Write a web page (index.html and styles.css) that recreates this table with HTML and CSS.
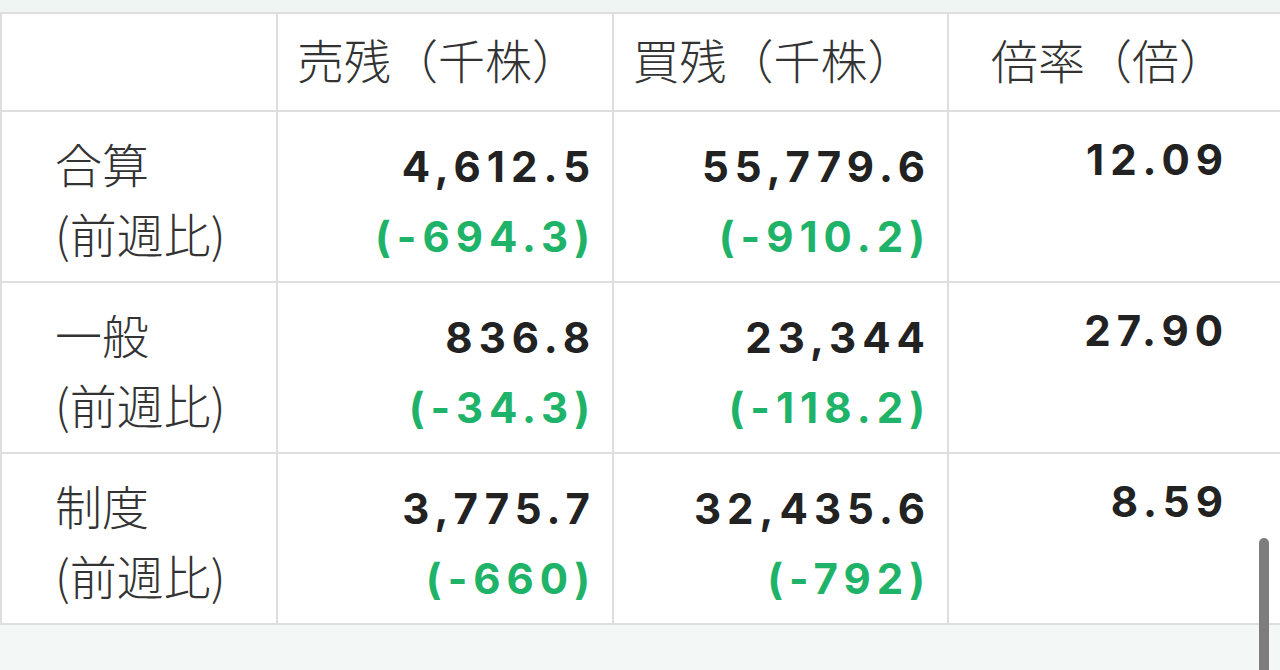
FILE: index.html
```html
<!DOCTYPE html>
<html lang="ja">
<head>
<meta charset="utf-8">
<link rel="stylesheet" href="styles.css">
</head>
<body>
<div class="band-top"></div>
<table class="margin-table">
  <colgroup>
    <col class="c-label">
    <col class="c-sell">
    <col class="c-buy">
    <col class="c-ratio">
  </colgroup>
  <thead>
    <tr>
      <th></th>
      <th>売残（千株）</th>
      <th>買残（千株）</th>
      <th class="h-ratio">倍率（倍）</th>
    </tr>
  </thead>
  <tbody>
    <tr>
      <td class="label">合算<br>(前週比)</td>
      <td class="num"><div class="val">4,612.5</div><div class="chg">(-694.3)</div></td>
      <td class="num"><div class="val">55,779.6</div><div class="chg">(-910.2)</div></td>
      <td class="num ratio"><div class="val">12.09</div></td>
    </tr>
    <tr>
      <td class="label">一般<br>(前週比)</td>
      <td class="num"><div class="val">836.8</div><div class="chg">(-34.3)</div></td>
      <td class="num"><div class="val">23,344</div><div class="chg">(-118.2)</div></td>
      <td class="num ratio"><div class="val">27.90</div></td>
    </tr>
    <tr>
      <td class="label">制度<br>(前週比)</td>
      <td class="num"><div class="val">3,775.7</div><div class="chg">(-660)</div></td>
      <td class="num"><div class="val">32,435.6</div><div class="chg">(-792)</div></td>
      <td class="num ratio"><div class="val">8.59</div></td>
    </tr>
  </tbody>
</table>
<div class="band-bottom"></div>
<div class="scrollbar"></div>
</body>
</html>
```
FILE: styles.css
```css
html, body {
  margin: 0;
  padding: 0;
  background: #ffffff;
  height: 670px;
  overflow: hidden;
}
body {
  position: relative;
  font-family: "Noto Sans CJK JP", "Noto Sans", sans-serif;
  color: #333333;
}
.band-top {
  height: 12px;
  background: #eef5f2;
}
.margin-table {
  width: 1284px;
  border-collapse: collapse;
  table-layout: fixed;
  background: #ffffff;
}
.c-label { width: 276px; }
.c-sell { width: 336px; }
.c-buy { width: 335px; }
.c-ratio { width: 337px; }

.margin-table th,
.margin-table td {
  border: 2px solid #dedede;
  padding: 0;
}
.margin-table th {
  height: 98px;
  box-sizing: border-box;
  font-size: 47px;
  font-weight: 300;
  color: #333333;
  text-align: center;
  vertical-align: middle;
  padding-bottom: 8px;
  padding-right: 14px;
}
.margin-table th.h-ratio {
  text-align: left;
  padding-left: 42px;
  padding-right: 0;
}
.margin-table td {
  height: 171px;
  vertical-align: top;
  padding-top: 20px;
  box-sizing: border-box;
}
.margin-table td.label {
  font-size: 47px;
  font-weight: 300;
  line-height: 70px;
  color: #333333;
  padding-left: 53px;
  padding-top: 16px;
}
.margin-table td.num {
  text-align: right;
  padding-right: 16px;
  font-family: "Inter", "Liberation Sans", Arial, sans-serif;
  font-weight: 700;
  font-size: 42px;
  line-height: 70px;
  letter-spacing: 6px;
}
.margin-table td.ratio {
  padding-right: 55px;
  padding-top: 13px;
}
.val { color: #222222; }
.chg { color: #1fb36a; }

.band-bottom {
  height: 60px;
  background: #f3f7f5;
}
.scrollbar {
  position: absolute;
  left: 1259px;
  top: 538px;
  width: 10px;
  height: 150px;
  border-radius: 5px;
  background: #7d7d7d;
}
```
